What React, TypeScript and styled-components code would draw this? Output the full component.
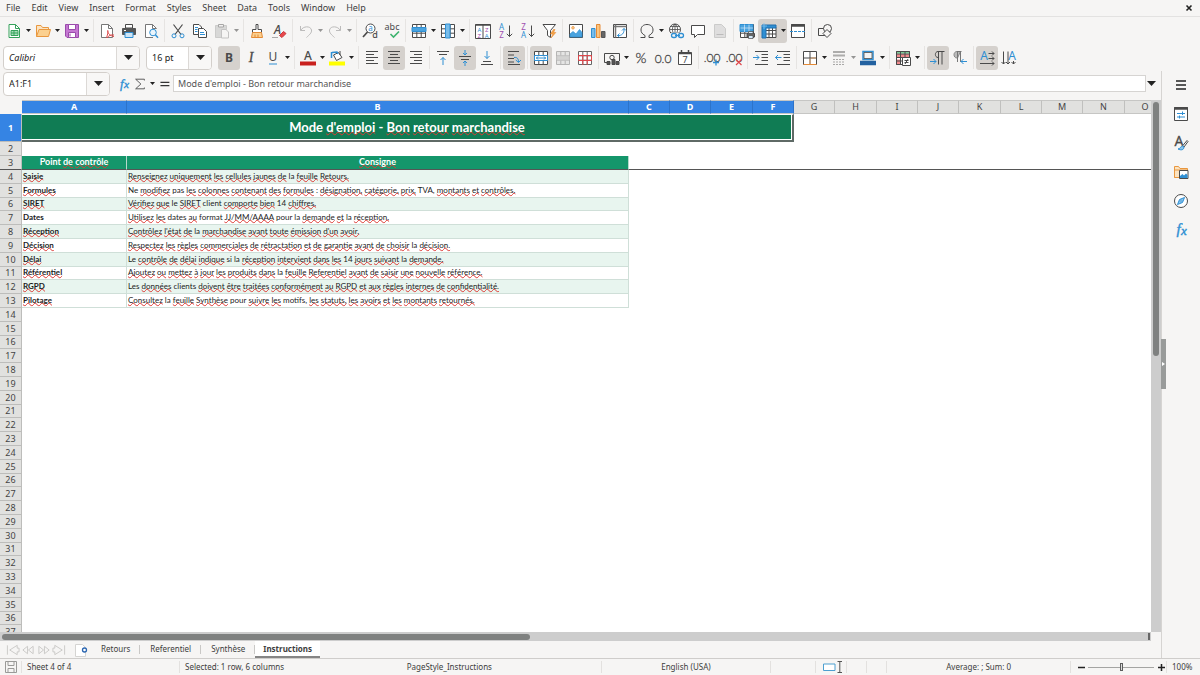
import React from "react";
import styled, { createGlobalStyle, css } from "styled-components";

const ink = "#4a4a4a";
const blue = "#2f8fd3";
const uiFont = '"Noto Sans", "Open Sans", sans-serif';
const cellFont = 'Lato, "Noto Sans", sans-serif';

const GlobalStyle = createGlobalStyle`
  * { box-sizing: border-box; }
  html, body, #root { height: 100%; }
  body { margin: 0; overflow: hidden; background: #f6f5f4; color: #3d3d3d; font: 9px/12px ${uiFont}; }
  button, input { font: inherit; color: inherit; margin: 0; padding: 0; border: 0; background: none; }
  svg { display: block; flex: none; overflow: visible; }
`;

/* ---------- frame ---------- */

const Window = styled.div`
  display: flex;
  flex-direction: column;
  height: 100vh;
`;

const MenuBar = styled.nav`
  display: flex;
  align-items: center;
  justify-content: space-between;
  height: 17px;
  padding: 0 6px 0 1px;
  border-bottom: 1px solid #e3e2e1;
  flex: none;
`;

const MenuList = styled.div`
  display: flex;
`;

const MenuItem = styled.button`
  padding: 0 5px;
  margin-right: 1px;
`;

const CloseButton = styled.button`
  width: 10px;
  height: 14px;
  display: grid;
  place-items: center;
`;

const Toolbar = styled.div`
  display: flex;
  align-items: center;
  height: 27px;
  padding-left: 3px;
  flex: none;
`;

const ToolButton = styled.button<{ $active?: boolean; $off?: boolean }>`
  display: flex;
  align-items: center;
  justify-content: center;
  width: 22px;
  height: 24px;
  border-radius: 3px;
  flex: none;
  ${(p) => p.$active && css`background: #d5d1cd;`}
  ${(p) => p.$off && css`opacity: 0.45;`}
`;

const SplitTool = styled.div<{ $active?: boolean; $off?: boolean }>`
  display: flex;
  align-items: center;
  width: 29px;
  height: 24px;
  border-radius: 3px;
  flex: none;
  ${(p) => p.$active && css`background: #d5d1cd;`}
  ${(p) => p.$off && css`opacity: 0.45;`}
`;

const ArrowButton = styled.button`
  display: grid;
  place-items: center;
  width: 7px;
  height: 22px;
`;

const Divider = styled.span`
  width: 1px;
  height: 23px;
  margin: 0 2px;
  background: #e6e4e2;
  flex: none;
  ${SplitTool} + & { margin-left: 3px; }
`;

/* ---------- combo boxes and formula bar ---------- */

const Combo = styled.div<{ $width: number }>`
  display: flex;
  width: ${(p) => p.$width}px;
  height: 24px;
  margin-right: 6px;
  background: #fff;
  border: 1px solid #d3cfcb;
  border-radius: 4px;
  overflow: hidden;
  flex: none;
`;

const ComboInput = styled.input<{ $italic?: boolean }>`
  flex: 1;
  min-width: 0;
  padding-left: 5px;
  color: #222;
  font-style: ${(p) => (p.$italic ? "italic" : "normal")};
`;

const ComboButton = styled.button`
  display: grid;
  place-items: center;
  width: 23px;
  background: #f8f7f6;
  border-left: 1px solid #dcd9d6;
`;

const FormulaBar = styled(Toolbar)`
  height: 29px;
  padding: 0 4px 4px 3px;
`;

const FormulaTools = styled.div`
  display: flex;
  align-items: center;
  flex: none;
`;

const FormulaButton = styled.button<{ $width: number }>`
  display: grid;
  place-items: center;
  width: ${(p) => p.$width}px;
  height: 22px;
`;

const FormulaInput = styled.input`
  flex: 1;
  min-width: 0;
  height: 17px;
  padding-left: 4px;
  color: #555;
  background: #fff;
  border: 1px solid #d6d4d2;
`;

/* ---------- work area ---------- */

const WorkArea = styled.div`
  display: flex;
  flex: 1;
  min-height: 0;
`;

const Main = styled.main`
  display: flex;
  flex-direction: column;
  flex: 1;
  min-width: 0;
`;

const SideBar = styled.aside`
  position: relative;
  display: flex;
  flex-direction: column;
  align-items: center;
  gap: 5px;
  width: 39px;
  padding-top: 2px;
  border-left: 1px solid #d6d4d2;
  flex: none;
`;

const SideButton = styled.button`
  display: grid;
  place-items: center;
  width: 24px;
  height: 24px;
`;

const SideHandle = styled.button`
  position: absolute;
  left: -1px;
  top: calc(50% - 26px);
  display: grid;
  place-items: center;
  width: 5px;
  height: 50px;
  background: #999b9a;
`;

const SheetRow = styled.div`
  display: flex;
  flex: 1;
  min-height: 0;
`;

const SheetView = styled.div`
  flex: 1;
  min-width: 0;
  overflow: hidden;
  background: #fff;
`;

const VerticalTrack = styled.div`
  display: flex;
  justify-content: center;
  width: 10px;
  padding-top: 2px;
  background: #cdcdcd;
  flex: none;
`;

const VerticalThumb = styled.div`
  width: 6px;
  height: 48%;
  border-radius: 3px;
  background: #7f8180;
`;

const HorizontalTrack = styled.div`
  display: flex;
  align-items: center;
  justify-content: space-between;
  height: 9px;
  margin-right: 10px;
  padding: 0 1px 0 2px;
  background: #cdcdcd;
  flex: none;
`;

const HorizontalThumb = styled.div`
  width: 46%;
  height: 6px;
  border-radius: 3px;
  background: #7f8180;
`;

const TrackEnd = styled.div`
  width: 2px;
  height: 7px;
  background: #666;
`;

/* ---------- sheet ---------- */

const Grid = styled.table`
  width: 100%;
  table-layout: fixed;
  border-collapse: separate;
  border-spacing: 0;
  line-height: 12px;
  td, th { padding: 0; white-space: nowrap; overflow: hidden; }
`;

const Corner = styled.th`
  background: #f6f5f4;
`;

const ColumnHead = styled.th<{ $selected?: boolean }>`
  height: 14px;
  font-weight: ${(p) => (p.$selected ? 700 : 400)};
  color: ${(p) => (p.$selected ? "#fff" : "#444")};
  background: ${(p) => (p.$selected ? "#3584e4" : "#e1e1df")};
  border-right: 1px solid ${(p) => (p.$selected ? "#2d73c9" : "#c0c0be")};
  border-top: 1px solid #c6c6c4;
  border-bottom: 1px solid #c6c6c4;
`;

const RowHead = styled.th<{ $selected?: boolean; $frozenEdge?: boolean }>`
  font-weight: ${(p) => (p.$selected ? 700 : 400)};
  color: ${(p) => (p.$selected ? "#fff" : "#444")};
  background: ${(p) => (p.$selected ? "#3584e4" : "#e1e1df")};
  border-right: 1px solid #bdbdbb;
  border-bottom: 1px solid ${(p) => (p.$frozenEdge ? "#555" : "#bdbdbb")};
`;

const RowLine = styled.tr<{ $height: number }>`
  height: ${(p) => p.$height}px;
  > * { height: ${(p) => p.$height}px; line-height: ${(p) => p.$height - 1}px; }
`;

const TitleCell = styled.td`
  background: #107c54;
  color: #fff;
  text-align: center;
  border-top: 1px solid #fff;
  border-right: 2px solid #5f6a66;
  border-bottom: 2px solid #5f6a66;
  box-shadow: inset -1px -1px 0 #fff;
  && {
    padding-bottom: 1px;
    font: 700 13px/20px ${cellFont};
  }
`;

const HeadingCell = styled.th`
  background: #14966b;
  color: #fff;
  border-right: 1px solid #b7d9cc;
  border-bottom: 1px solid #555;
  && {
    padding-bottom: 2px;
    font: 700 9px/10px ${cellFont};
  }
`;

const EmptyCell = styled.td<{ $frozenEdge?: boolean }>`
  border-bottom: ${(p) => (p.$frozenEdge ? "1px solid #555" : "0")};
`;

const DataCell = styled.td<{ $tinted?: boolean; $bold?: boolean }>`
  background: ${(p) => (p.$tinted ? "#e8f5ef" : "#fff")};
  color: #1c1c1c;
  border-right: 1px solid #cfdfd8;
  border-bottom: 1px solid #cfdfd8;
  && {
    padding: 0 0 2px 1px;
    font: ${(p) => (p.$bold ? 700 : 400)} 8px/10px ${cellFont};
  }
`;

const Misspelled = styled.span`
  text-decoration: underline wavy #dc3a34 1px;
  text-decoration-skip-ink: none;
  text-underline-offset: -1px;
`;

/* ---------- tabs and status ---------- */

const TabBar = styled.div`
  display: flex;
  align-items: stretch;
  height: 17px;
  padding-left: 6px;
  font-size: 8px;
  flex: none;
`;

const TabNav = styled.div`
  display: flex;
  align-items: center;
  color: #c9c8c6;
  width: 60px;
  justify-content: space-between;
`;

const NavButton = styled.button`
  display: grid;
  place-items: center;
`;

const AddSheet = styled.button`
  display: grid;
  place-items: center;
  width: 12px;
  margin: 0 4px 0 9px;
`;

const Tab = styled.button<{ $active?: boolean }>`
  position: relative;
  padding: 0 10px;
  line-height: 14px;
  border-bottom: 2px solid transparent;
  &:not(:last-child)::after {
    content: "";
    position: absolute;
    right: 0;
    top: 4px;
    height: 9px;
    border-right: 1px solid #c9c8c6;
  }
  ${(p) => p.$active && css`
    padding: 0 8px;
    font-weight: 700;
    background: #fff;
    border-bottom-color: #858585;
  `}
`;

const StatusBar = styled.footer`
  display: grid;
  grid-template-columns: 22px 158px 118px 304fr 170fr 45fr 31px 20px 20px 184fr 96px 33px;
  align-items: center;
  height: 17px;
  font-size: 8px;
  border-top: 1px solid #cfcdcb;
  flex: none;
`;

const StatusCell = styled.div<{ $center?: boolean; $plain?: boolean }>`
  display: flex;
  align-items: center;
  justify-content: ${(p) => (p.$center ? "center" : "flex-start")};
  height: 12px;
  padding-left: ${(p) => (p.$center ? 0 : 5)}px;
  white-space: nowrap;
  border-right: 1px solid ${(p) => (p.$plain ? "transparent" : "#e3e1df")};
`;

const ZoomButton = styled.button`
  display: grid;
  place-items: center;
  width: 10px;
  height: 12px;
`;

const ZoomSlider = styled.input`
  appearance: none;
  flex: 1;
  min-width: 0;
  height: 10px;
  margin: 0 2px;
  background: linear-gradient(#a5a5a3, #a5a5a3) center / 100% 1px no-repeat;
  &::-webkit-slider-thumb {
    appearance: none;
    width: 3px;
    height: 8px;
    background: #ddd;
    border: 1px solid #5c5c5c;
  }
`;

/* ---------- icons ---------- */

const Svg = ({ children, size = 16 }: { children: React.ReactNode; size?: number }) => (
  <svg width={size} height={size} viewBox="0 0 16 16" fill="none" stroke={ink} strokeWidth="1" aria-hidden="true">
    {children}
  </svg>
);

const Arrow = ({ wide = false }: { wide?: boolean }) => (
  <svg width={wide ? 9 : 5} height={wide ? 5 : 3} viewBox="0 0 8 4" preserveAspectRatio="none" aria-hidden="true">
    <path d="M0 0H8L4 4Z" fill="#222" />
  </svg>
);

const Letter = ({ x, y, size, color = ink, weight = 400, children, family = uiFont, italic = false, outline = 0 }: {
  x: number; y: number; size: number; color?: string; weight?: number; children: string; family?: string; italic?: boolean; outline?: number;
}) => (
  <text x={x} y={y} fontSize={size} fontWeight={weight} fill={color} stroke={outline ? color : "none"} strokeWidth={outline}
    textAnchor="middle" fontFamily={family} fontStyle={italic ? "italic" : "normal"}>{children}</text>
);

const tableGrid = "M1.5 1.5H14.5V14.5H1.5ZM1.5 5.8H14.5M1.5 10.2H14.5M5.8 1.5V14.5M10.2 1.5V14.5";

const icons: Record<string, React.ReactNode> = {
  new: <><path d="M3 1.5H9.5L13.5 5.5V14.5H3Z" fill="#fff" stroke="#35a15b" /><path d="M9.5 1.5V5.5H13.5" stroke="#35a15b" /><path d="M5 7.5H12V12.5H5ZM5 10H12M8 7.5V12.5" fill="#a9dfba" stroke="#35a15b" /></>,
  open: <><path d="M1.5 13.5V2.5H6L7.5 4.5H13.5V6.5" fill="#fbe3c1" stroke="#e9973e" /><path d="M1.5 13.5L4 6.5H15.5L13.5 13.5Z" fill="#fbd08f" stroke="#e9973e" /></>,
  save: <><path d="M1.5 1.5H14.5V14.5H3L1.5 13Z" fill="#c577d2" stroke="#9a4bab" /><path d="M4.5 1.5H11.5V6.5H4.5Z" fill="#fff" stroke="#9a4bab" /><path d="M4.5 9.5H11.5V14.5H4.5Z" fill="#fff" stroke="#9a4bab" /><path d="M6 10.5V13.5" stroke="#9a4bab" /></>,
  pdf: <><path d="M2.5 1.5H9.5L13.5 5.5V14.5H2.5Z" fill="#fff" stroke="#777" /><path d="M9.5 1.5V5.5H13.5" stroke="#777" /><path d="M8.5 7.500C8.5 10 11 13 15 13.5M15 12C12 11.500 9.5 12.5 8 15C7 14 9.5 11 9 7.5" stroke="#dc4a4a" /></>,
  print: <><path d="M4.5 1.5H11.5V5H4.5Z" fill="#fff" /><path d="M1.5 5.5H14.5V11.5H1.5Z" fill="#555" stroke="#555" /><path d="M4 9.5H12V14.5H4Z" fill="#cfe5f5" stroke={blue} /><path d="M3 7.5H5" stroke="#fff" /></>,
  preview: <><path d="M10 14.5H2.5V1.5H9.5L13.5 5.5V6" fill="#fff" stroke="#777" /><path d="M9.5 1.5V5.5H13" stroke="#777" /><circle cx="10" cy="9.5" r="3.3" fill="#eaf5fc" stroke={blue} /><path d="M12.5 12L15 14.7" stroke={blue} strokeWidth="1.5" /></>,
  cut: <><path d="M3.5 1.5L11 11.5M12.5 1.5L5 11.5" strokeWidth="1.2" /><circle cx="4" cy="12.8" r="2" stroke={blue} /><circle cx="12" cy="12.8" r="2" stroke={blue} /></>,
  copy: <><path d="M1.5 1.5H7L9.5 4V11.5H1.5Z" fill="#fff" /><path d="M6.5 5.5H11.5L14.5 8.5V14.5H6.5Z" fill="#fff" /><path d="M3 4.5H6M3 6.5H5.5M3 8.5H5.5M8 9.5H12M8 11.5H13" stroke={blue} /></>,
  paste: <><path d="M1.5 2.5H12.5V14.5H1.5Z" fill="#b5b5b5" stroke="#999" /><path d="M4.5 1.5H9.5V4H4.5Z" fill="#eee" /><path d="M7.5 6.5H12L14.5 9V15H7.5Z" fill="#f6f6f6" stroke="#888" /></>,
  brush: <><path d="M7 1.5H9V6.5H12.5V9.5H3.5V6.5H7Z" fill="#fff" /><path d="M3.5 9.5H12.5L13.5 14.5H2.5Z" fill="#fbd08f" stroke="#e58a35" /><path d="M6 11.5V14M9 11.5V14" stroke="#e58a35" /></>,
  clear: <><Letter x={6.5} y={11} size={12} italic weight={500}>A</Letter><path d="M8.5 12.5L12.5 8.5L15 10.5L11 14.5Z" fill="#e8484c" stroke="#c9383c" /><path d="M1 14.5H7" stroke="#aaa" /></>,
  undo: <path d="M2.5 3V7.5H7M2.8 7.3C5 3 12.5 2.5 13.5 7C14 10 11 12 8.5 14.5" stroke="#777" />,
  redo: <path d="M13.5 3V7.5H9M13.2 7.3C11 3 3.5 2.5 2.5 7C2 10 5 12 7.5 14.5" stroke="#777" />,
  find: <><circle cx="8.5" cy="5.5" r="4.5" fill="#fff" /><path d="M5.5 9L1 14" strokeWidth="1.7" /><Letter x={8.5} y={8} size={8} color={blue}>a</Letter><Letter x={13} y={15} size={9} weight={500}>d</Letter></>,
  spell: <><Letter x={8} y={7} size={9}>abc</Letter><path d="M6.5 11L9.5 14L15 8.5" stroke="#3db36e" strokeWidth="1.6" /></>,
  row: <><path d={tableGrid} fill="#fff" /><path d="M1 4.5H15V8.5H1Z" fill="#4aa3df" stroke={blue} /></>,
  column: <><path d={tableGrid} fill="#fff" /><path d="M5.5 1H10V15H5.5Z" fill="#79bdea" stroke={blue} /></>,
  sort: <><path d="M.5 1.5H15.5V15.500H.5ZM8 1.5V15.500" fill="#fff" /><path d="M.5 2H15.5" strokeWidth="1.5" /><Letter x={4.3} y={8.5} size={6} color={blue}>A</Letter><Letter x={4.3} y={14.5} size={6} color="#a04fb0">Z</Letter><Letter x={11.7} y={8.5} size={6} color="#a04fb0">Z</Letter><Letter x={11.7} y={14.5} size={6} color={blue}>A</Letter></>,
  asc: <><Letter x={4.5} y={7} size={8} color={blue}>A</Letter><Letter x={4.5} y={15} size={8} color="#a04fb0">Z</Letter><path d="M12.5 2.5V13.5M9.8 10.8L12.5 13.5L15.2 10.8" /></>,
  desc: <><Letter x={4.5} y={7} size={8} color="#a04fb0">Z</Letter><Letter x={4.5} y={15} size={8} color={blue}>A</Letter><path d="M12.5 2.5V13.5M9.8 10.8L12.5 13.5L15.2 10.8" /></>,
  filter: <><path d="M2 1.5H14.5L9.5 7.5V14.5L6.5 12.5V7.5Z" fill="#fff" /><path d="M12.5 6.5L9.5 11H12L10 15L14.8 9.5H12.5L14 6.5Z" fill="#f6a545" stroke="#e58a35" strokeWidth=".6" /></>,
  image: <><path d="M1.5 1.5H14.5V14.5H1.5Z" fill="#fff" /><path d="M2 14V11L5 8.5L8 11L11.5 6.5L14 9.5V14Z" fill="#4aa3df" stroke={blue} strokeWidth=".7" /><circle cx="5" cy="4.8" r="1.3" fill="#fbd08f" stroke="#e58a35" strokeWidth=".7" /></>,
  chart: <><path d="M1.5 5.5H5V14.5H1.5Z" fill="#79bdea" stroke={blue} /><path d="M6.5 1.5H10V14.5H6.5Z" fill="#fbc580" stroke="#e58a35" /><path d="M11.5 8.5H15V14.5H11.5Z" fill="#666" stroke="#555" /></>,
  pivot: <><path d="M1.5 1.5H14.5V14.5H1.5Z" fill="#fff" /><path d="M1.5 3.5H14.5M3.5 1.5V14.5" strokeWidth="1.5" stroke="#777" /><path d="M5.5 12.5C10 13 12.5 10 12 5.5M10 7.5L12 5.5L14 7.5M7.5 10.5L5.5 12.5L7.5 14.3" stroke={blue} /></>,
  omega: <path d="M1.5 14.5H6V12.5C3 11 2 9 2 7C2 3.5 4.5 1.5 8 1.5C11.5 1.5 14 3.5 14 7C14 9 13 11 10 12.5V14.5H14.5" />,
  link: <><circle cx="7" cy="6.5" r="5.5" fill="#fff" /><path d="M1.5 6.5H12.5M7 1V12M3 3.5H11M3 9.5H11M7 1C3.5 4 3.5 9 7 12C10.5 9 10.5 4 7 1" strokeWidth=".8" /><rect x="3" y="9.5" width="13" height="6.5" fill="#f6f5f4" stroke="none" /><rect x="3.5" y="10.5" width="5" height="4" rx="2" stroke={blue} strokeWidth="1.3" /><rect x="10.5" y="10.5" width="5" height="4" rx="2" stroke={blue} strokeWidth="1.3" /><path d="M7 12.5H12" stroke={blue} strokeWidth="1.3" /></>,
  comment: <path d="M1.5 2.5H14.5V11.5H7.5L4.5 14.5V11.5H1.5Z" fill="#fff" />,
  footer: <><path d="M2.5 1.5H9.5L13.5 5.5V14.5H2.5Z" fill="#c4c4c4" stroke="#999" /><path d="M4.5 11.5H11.5" stroke="#777" /></>,
  printArea: <><path d={tableGrid} fill="#fff" /><path d="M1 1.5H14V8.5H1Z" fill="#4aa3df" stroke={blue} /><path d="M1.5 5H14M5.5 1.5V9M10 1.5V9" stroke="#d5eafa" strokeWidth=".7" /><path d="M8 10.5H15.5V14H8Z" fill="#666" /><path d="M9.5 8.5H14V10.5H9.5ZM9.5 12.5H14V15.5H9.5Z" fill="#d5eafa" strokeWidth=".7" /></>,
  freeze: <><path d="M4.5 4.5H15V14.5H4.5ZM4.5 7.5H15M4.5 11H15M8 4.5V14.5M11.5 4.5V14.5" fill="#fff" /><path d="M1 2H15V5H5V15H1Z" fill="#2f8fd3" stroke="#1f6fae" /><path d="M3 0V6M0 3H6" stroke="#7fc3f0" strokeWidth=".8" /></>,
  split: <><path d="M1.5 1.5H14.5V14.5H1.5Z" fill="#fff" /><path d="M1 2.5H15" strokeWidth="2.5" /><path d="M0 8.5H16" stroke={blue} strokeDasharray="3 1" /></>,
  shapes: <><path d="M1.5 5.5H8.5V12.5H1.5Z" /><circle cx="10.5" cy="5.5" r="4" fill="#f6f5f4" /><path d="M10 6.5L14 10.5L10 14.5L6 10.5Z" fill="#f6f5f4" /></>,
  bold: <Letter x={8} y={12} size={12} weight={700}>B</Letter>,
  italic: <Letter x={8} y={12} size={14} italic family='"Liberation Serif", serif' outline={0.3}>I</Letter>,
  underline: <><Letter x={8} y={11} size={12}>U</Letter><path d="M4 14H12" stroke={blue} /></>,
  fontColor: <><Letter x={8} y={9.5} size={12} weight={500}>A</Letter><path d="M0 13.5H16" stroke="#c9211e" strokeWidth="4" /></>,
  highlight: <><path d="M4.5 5L9.5 2.5L13 7.5L7.5 10.5Z" fill="#fff" /><path d="M2.5 2V8M3 2.5L8 2L9 4" stroke={blue} strokeWidth="1.5" /><path d="M11 1V5" /><path d="M0 13.5H16" stroke="#ffff00" strokeWidth="4" /></>,
  left: <path d="M2 1.5H14M2 4.5H10M2 7.5H14M2 10.5H10M2 13.5H14" />,
  center: <path d="M2 1.5H14M4 4.5H12M2 7.5H14M4 10.5H12M2 13.5H14" />,
  right: <path d="M2 1.5H14M6 4.5H14M2 7.5H14M6 10.5H14M2 13.5H14" />,
  top: <><path d="M2 1.5H14M4 4.5H12" /><path d="M8 15V7.5M5.5 10L8 7.5L10.5 10" stroke={blue} /></>,
  middle: <><path d="M2 6.500H14M4 9.5H12" /><path d="M8 0V5M6 3L8 5L10 3M8 16V11M6 13L8 11L10 13" stroke={blue} /></>,
  bottom: <><path d="M2 14.5H14M4 11.5H12" /><path d="M8 1V8.5M5.5 6L8 8.5L10.5 6" stroke={blue} /></>,
  wrap: <><path d="M2 1.5H13M2 5H8M2 8.5H8M2 12H8M2 14.5H14" /><path d="M8 7.5C11.5 7 12.5 9 12.5 12M9.8 10L12.5 12.5L15 10" stroke={blue} /></>,
  merge: <><path d={tableGrid} fill="#fff" /><path d="M1.5 5.5H14.5V10.5H1.5Z" fill="#fff" stroke={blue} /><path d="M3 8H13M5 6.5L3.5 8L5 9.5M11 6.5L12.5 8L11 9.5" stroke={blue} /></>,
  mergeOnly: <><path d={tableGrid} fill="#d2d2d2" stroke="#666" /><path d="M2 6H14V10H2Z" fill="#aaa" stroke="#999" /></>,
  splitCells: <><path d={tableGrid} fill="#fff" stroke="#666" /><path d="M1.5 5.5H14.5V10.5H1.5ZM5.8 5V15M10.2 5V15" stroke="#e0474c" /></>,
  currency: <><path d="M.5 3.5H15.5V11" /><path d="M.5 3.5V12.5H5" /><circle cx="8" cy="7.5" r="2.2" /><path d="M3 11.5H6V14.5H3ZM8 9.5H11V14.5H8ZM12 11.5H15V14.5H12Z" fill="#555" /></>,
  percent: <Letter x={8} y={13} size={14} weight={300} family={cellFont} outline={0.3}>%</Letter>,
  number: <Letter x={8} y={13} size={12} weight={300} family={cellFont} outline={0.3}>0.0</Letter>,
  date: <><path d="M1.5 2.5H14.5V14.5H1.5Z" fill="#fff" /><path d="M1 3.5H15M4.5 0V3M11.5 0V3" strokeWidth="1.5" /><Letter x={8} y={13} size={9}>7</Letter></>,
  addDecimal: <><Letter x={8} y={12} size={12} weight={300} family={cellFont} outline={0.3}>.00</Letter><path d="M12 9.5V15.5M9 12.5H15" stroke={blue} strokeWidth="1.3" /></>,
  removeDecimal: <><Letter x={8} y={12} size={12} weight={300} family={cellFont} outline={0.3}>.00</Letter><path d="M10 9.5L15.5 15M15.5 9.5L10 15" stroke="#e0474c" strokeWidth="1.2" /></>,
  indent: <><path d="M2 1.5H15M8.5 4.5H15M8.5 7.5H15M8.5 10.5H15M2 14.5H15" /><path d="M0 7.5H6M3.5 5L6 7.5L3.5 10" stroke={blue} /></>,
  outdent: <><path d="M2 1.5H15M8.5 4.5H15M8.5 7.5H15M8.5 10.5H15M2 14.5H15" /><path d="M.5 7.5H6.5M3 5L.5 7.5L3 10" stroke={blue} /></>,
  borders: <><path d="M1.5 1.5H14.5V14.5H1.5ZM8 1.5V14.5M1.5 8H14.5" fill="#fff" /><path d="M1.5 14.5H14.5" stroke="#e58a35" /><path d="M8 8.5V14M9 8H14" stroke="#d9a06a" /></>,
  lineStyle: <><path d="M2 2H14M2 5.5H14" stroke="#555" strokeWidth="2" /><path d="M2 9.5H14M2 12H14M2 14.5H14" strokeDasharray="2 1" /></>,
  borderColor: <><path d="M3 1.5H13V9.5H3Z" fill="#f4f4f4" stroke={blue} strokeWidth="1.5" /><path d="M4 2.5H12V8.5H4Z" strokeWidth=".8" /><path d="M0 13H16" stroke="#2361a0" strokeWidth="4.5" /></>,
  conditional: <><path d="M1.5 1.5H14.5V14.5H1.5Z" fill="#fff" /><path d="M2 5.5H14" stroke="#f08a8d" strokeWidth="3" /><path d="M2 9.5H5V14H2Z" fill="#f08a8d" stroke="none" /><path d="M2 2.5H14" stroke="#7ccb95" strokeWidth="2" /><path d="M1.5 1.500V14.500H8M1.5 1.500H14.500V8M5.5 1V14.5M10 1V8M1.5 4H14.5M1.5 7.500H14.5M1.5 11H8" /><path d="M7.5 7.5H15.5V15.5H7.5Z" fill="#fff" /><path d="M9.5 10.5H13.5M9.5 12.5H13.5M13 9L10 14" /></>,
  ltr: <><path d="M14.5 1.5H8C4.5 1.5 4.5 7.5 8 7.5H8.5M8.5 1.5V14.5M12 1.5V14.5" /><path d="M0 11.5H6M3.5 9L6 11.5L3.5 14" stroke={blue} /></>,
  rtl: <><path d="M8.5 1.5H5C1 1.5 1 8 5 8H5.5Z" fill="#bbb" stroke="#888" /><path d="M9.5 1.5H5M5.5 1.5V12M8.5 1.5V12" stroke="#777" /><path d="M15 11.5H9M11.5 9L9 11.5L11.5 14" stroke={blue} /></>,
  horizontal: <><Letter x={5} y={10} size={12} color={blue}>A</Letter><path d="M9.5 3.5H15M13 1.5L15 3.5L13 5.5M9.5 8.5H15M13 6.5L15 8.5L13 10.5M1 13.5H15M13 11.5L15 13.5L13 15.5" /></>,
  vertical: <><Letter x={11} y={10} size={12} color={blue}>A</Letter><path d="M2.5 1.5V14M.5 12L2.5 14L4.5 12M7 1.5V14M5 12L7 14L9 12M12.5 11V14M10.5 12L12.5 14L14.5 12" /></>,
  fx: <><Letter x={5.5} y={12} size={15} italic color={blue} outline={0.4} family='"Liberation Serif", serif'>f</Letter><Letter x={11} y={13} size={13} italic color={blue} outline={0.4} family='"Liberation Serif", serif'>x</Letter></>,
  sum: <path d="M13 4V2.5H3L9 8L3 13.5H13V12" />,
  equal: <path d="M3 6.5H14M3 10.5H14" strokeWidth="1.6" stroke="#333" />,
  menu: <path d="M3 4H13M3 8H13M3 12H13" strokeWidth="1.5" stroke="#222" />,
  properties: <><path d="M1.5 1.5H14.5V14.5H1.5Z" fill="#fff" /><path d="M1 2.5H15" strokeWidth="2.5" /><path d="M4 7.5H12M4 11H12M9.5 5.5V9M6.5 9.5V12.5" stroke={blue} /></>,
  styles: <><Letter x={6} y={11} size={14} outline={0.3}>A</Letter><path d="M9.5 11L14 5.5L15 6.5L11 12Z" fill="#fff" /><path d="M9.5 11C7.5 11 8 13.5 5 14C8 15.5 11 15 11 12Z" fill="#8cc6ee" stroke={blue} /></>,
  gallery: <><path d="M6 13.5H1.5V2.5H5.5L7 4.5H14.5V6" fill="#fbe3c1" stroke="#e9973e" /><path d="M1.5 13.5V6H15" stroke="#e9973e" /><path d="M6.5 6.5H15V14.5H6.5Z" fill="#fff" /><path d="M7 14V12L9.5 10L11 11.5L13 9.5L14.5 11V14Z" fill={blue} stroke="none" /></>,
  navigator: <><circle cx="8" cy="8" r="6.5" fill="#fff" /><path d="M11.5 4.5L9.5 9.5L4.5 11.5L6.5 6.5Z" fill="#8cc6ee" stroke={blue} /><circle cx="8" cy="8" r="1" fill="#fff" stroke={blue} strokeWidth=".8" /></>,
};

type Tool = { icon: string; label: string; drop?: boolean; active?: boolean; off?: boolean } | "|";

const t = (icon: string, label: string, flags = ""): Tool => ({
  icon, label,
  drop: flags.includes("d"), active: flags.includes("a"), off: flags.includes("o"),
});

const standardTools: Tool[] = [
  t("new", "New", "d"), t("open", "Open", "d"), t("save", "Save", "d"), "|",
  t("pdf", "Export as PDF"), t("print", "Print"), t("preview", "Print preview"), "|",
  t("cut", "Cut"), t("copy", "Copy"), t("paste", "Paste", "do"), "|",
  t("brush", "Clone formatting"), t("clear", "Clear formatting"), "|",
  t("undo", "Undo", "do"), t("redo", "Redo", "do"), "|",
  t("find", "Find and replace"), t("spell", "Spelling"), "|",
  t("row", "Row", "d"), t("column", "Column", "d"), "|",
  t("sort", "Sort"), t("asc", "Sort ascending"), t("desc", "Sort descending"), t("filter", "AutoFilter"), "|",
  t("image", "Insert image"), t("chart", "Insert chart"), t("pivot", "Pivot table"), "|",
  t("omega", "Special character", "d"), t("link", "Hyperlink"), t("comment", "Comment"), t("footer", "Headers and footers", "o"), "|",
  t("printArea", "Define print area"), t("freeze", "Freeze rows and columns", "da"), t("split", "Split window"), "|",
  t("shapes", "Draw functions"),
];

const formatTools: Tool[] = [
  t("bold", "Bold", "a"), t("italic", "Italic"), t("underline", "Underline", "d"), "|",
  t("fontColor", "Font color", "d"), t("highlight", "Highlighting", "d"), "|",
  t("left", "Align left"), t("center", "Align center", "a"), t("right", "Align right"), "|",
  t("top", "Align top"), t("middle", "Center vertically", "a"), t("bottom", "Align bottom"), "|",
  t("wrap", "Wrap text", "a"), "|",
  t("merge", "Merge and center", "a"), t("mergeOnly", "Merge cells", "o"), t("splitCells", "Unmerge cells"), "|",
  t("currency", "Currency", "d"), t("percent", "Percent"), t("number", "Number"), t("date", "Date"), "|",
  t("addDecimal", "Add decimal place"), t("removeDecimal", "Delete decimal place"), "|",
  t("indent", "Increase indent"), t("outdent", "Decrease indent"), "|",
  t("borders", "Borders", "d"), t("lineStyle", "Border style", "do"), t("borderColor", "Border color", "d"), "|",
  t("conditional", "Conditional formatting", "d"), "|",
  t("ltr", "Left to right", "a"), t("rtl", "Right to left"), "|",
  t("horizontal", "Text direction horizontal", "a"), t("vertical", "Text direction vertical"),
];

const Tools = ({ items }: { items: Tool[] }) => (
  <>
    {items.map((item, i) => {
      if (item === "|") return <Divider key={i} />;
      if (!item.drop) {
        return (
          <ToolButton key={i} aria-label={item.label} $active={item.active} $off={item.off}>
            <Svg>{icons[item.icon]}</Svg>
          </ToolButton>
        );
      }
      return (
        <SplitTool key={i} $active={item.active} $off={item.off}>
          <ToolButton aria-label={item.label}><Svg>{icons[item.icon]}</Svg></ToolButton>
          <ArrowButton aria-label={`${item.label} options`}><Arrow /></ArrowButton>
        </SplitTool>
      );
    })}
  </>
);

/* ---------- sheet data ---------- */

const menus = ["File", "Edit", "View", "Insert", "Format", "Styles", "Sheet", "Data", "Tools", "Window", "Help"];
const columns = "ABCDEFGHIJKLMNO".split("");
const columnWidths = [105, 502, 41, 41, 42, 41, 41, 42, 41, 41, 42, 41, 41, 42, 41];

const entries = [
  ["Saisie", "Renseignez uniquement les cellules jaunes de la feuille Retours."],
  ["Formules", "Ne modifiez pas les colonnes contenant des formules : désignation, catégorie, prix, TVA, montants et contrôles."],
  ["SIRET", "Vérifiez que le SIRET client comporte bien 14 chiffres."],
  ["Dates", "Utilisez les dates au format JJ/MM/AAAA pour la demande et la réception."],
  ["Réception", "Contrôlez l'état de la marchandise avant toute émission d'un avoir."],
  ["Décision", "Respectez les règles commerciales de rétractation et de garantie avant de choisir la décision."],
  ["Délai", "Le contrôle de délai indique si la réception intervient dans les 14 jours suivant la demande."],
  ["Référentiel", "Ajoutez ou mettez à jour les produits dans la feuille Referentiel avant de saisir une nouvelle référence."],
  ["RGPD", "Les données clients doivent être traitées conformément au RGPD et aux règles internes de confidentialité."],
  ["Pilotage", "Consultez la feuille Synthèse pour suivre les motifs, les statuts, les avoirs et les montants retournés."],
];

const knownWords = new Set(["Mode", "-", "Point", "Dates", "dates", "la", "Ne", "pas", ":", "TVA,", "le", "Le", "client", "clients", "14", "format", "pour", "si", "Les", "motifs,"]);

const Spelled = ({ text }: { text: string }) => (
  <>
    {text.split(" ").map((word, i) => (
      <React.Fragment key={i}>
        {i > 0 && " "}
        {knownWords.has(word) ? word : <Misspelled>{word}</Misspelled>}
      </React.Fragment>
    ))}
  </>
);

const rowHeight = (row: number) => (row % 5 === 1 ? 13 : 14);
const blankRows = Array.from({ length: 25 }, (_, i) => i + 14);

const Sheet = () => (
  <Grid>
    <colgroup>
      <col style={{ width: 22 }} />
      {columnWidths.map((width, i) => <col key={i} style={{ width }} />)}
    </colgroup>
    <thead>
      <tr>
        <Corner aria-label="Select all" />
        {columns.map((name, i) => <ColumnHead key={name} scope="col" $selected={i < 6}>{name}</ColumnHead>)}
      </tr>
    </thead>
    <tbody>
      <RowLine $height={28}>
        <RowHead scope="row" $selected>1</RowHead>
        <TitleCell colSpan={6}>
          <Spelled text="Mode d'emploi - Bon retour marchandise" />
        </TitleCell>
        <EmptyCell colSpan={9} />
      </RowLine>
      <RowLine $height={14}>
        <RowHead scope="row">2</RowHead>
        <EmptyCell colSpan={15} />
      </RowLine>
      <RowLine $height={14}>
        <RowHead scope="row" $frozenEdge>3</RowHead>
        <HeadingCell><Spelled text="Point de contrôle" /></HeadingCell>
        <HeadingCell><Spelled text="Consigne" /></HeadingCell>
        <EmptyCell colSpan={13} $frozenEdge />
      </RowLine>
      {entries.map(([label, text], i) => (
        <RowLine key={label} $height={rowHeight(i + 4)}>
          <RowHead scope="row">{i + 4}</RowHead>
          <DataCell $bold $tinted={i % 2 === 0}><Spelled text={label} /></DataCell>
          <DataCell $tinted={i % 2 === 0}><Spelled text={text} /></DataCell>
          <EmptyCell colSpan={13} />
        </RowLine>
      ))}
      {blankRows.map((row) => (
        <RowLine key={row} $height={rowHeight(row)}>
          <RowHead scope="row">{row}</RowHead>
          <EmptyCell colSpan={15} />
        </RowLine>
      ))}
    </tbody>
  </Grid>
);

const navArrows = [
  ["First sheet", "M1.5 1V11M12 1L4 6L12 11V8H14V4H12Z"],
  ["Previous sheet", "M7 2L2 6L7 10ZM13 2L8 6L13 10Z"],
  ["Next sheet", "M2 2L7 6L2 10ZM8 2L13 6L8 10Z"],
  ["Last sheet", "M13.5 1V11M3 1L11 6L3 11V8H1V4H3Z"],
];

const sideTools = [
  ["menu", "Sidebar settings"], ["properties", "Properties"], ["styles", "Styles"],
  ["gallery", "Gallery"], ["navigator", "Navigator"], ["fx", "Functions"],
];

export default function App() {
  return (
    <Window>
      <GlobalStyle />
      <MenuBar>
        <MenuList>{menus.map((name) => <MenuItem key={name}>{name}</MenuItem>)}</MenuList>
        <CloseButton aria-label="Close document">
          <svg width="6" height="6" viewBox="0 0 6 6" stroke="#222" strokeWidth="1.6"><path d="M.5 .5L5.5 5.5M5.5 .5L.5 5.5" /></svg>
        </CloseButton>
      </MenuBar>
      <Toolbar><Tools items={standardTools} /></Toolbar>
      <Toolbar>
        <Combo $width={137}>
          <ComboInput $italic aria-label="Font name" defaultValue="Calibri" />
          <ComboButton aria-label="Choose font"><Arrow wide /></ComboButton>
        </Combo>
        <Combo $width={66}>
          <ComboInput aria-label="Font size" defaultValue="16 pt" />
          <ComboButton aria-label="Choose size"><Arrow wide /></ComboButton>
        </Combo>
        <Tools items={formatTools} />
      </Toolbar>
      <WorkArea>
        <Main>
          <FormulaBar>
            <Combo $width={107}>
              <ComboInput aria-label="Name box" defaultValue="A1:F1" />
              <ComboButton aria-label="Named ranges"><Arrow wide /></ComboButton>
            </Combo>
            <FormulaTools>
              <FormulaButton $width={16} aria-label="Function wizard"><Svg size={14}>{icons.fx}</Svg></FormulaButton>
              <FormulaButton $width={16} aria-label="Select function"><Svg size={14}>{icons.sum}</Svg></FormulaButton>
              <FormulaButton $width={8} aria-label="Function list"><Arrow /></FormulaButton>
              <FormulaButton $width={17} aria-label="Formula"><Svg size={13}>{icons.equal}</Svg></FormulaButton>
            </FormulaTools>
            <FormulaInput aria-label="Input line" defaultValue="Mode d'emploi - Bon retour marchandise" />
            <FormulaButton $width={11} aria-label="Expand formula bar"><Arrow wide /></FormulaButton>
          </FormulaBar>
          <SheetRow>
            <SheetView><Sheet /></SheetView>
            <VerticalTrack><VerticalThumb /></VerticalTrack>
          </SheetRow>
          <HorizontalTrack><HorizontalThumb /><TrackEnd /></HorizontalTrack>
          <TabBar>
            <TabNav>
              {navArrows.map(([label, d]) => (
                <NavButton key={label} aria-label={label}>
                  <svg width="14" height="12" viewBox="0 0 15 12" fill="none" stroke="currentColor"><path d={d} /></svg>
                </NavButton>
              ))}
            </TabNav>
            <AddSheet aria-label="Add sheet">
              <svg width="12" height="14" viewBox="0 0 12 14" fill="none"><path d="M.5 1.5H7.5L10.5 4.5V13.5H.5Z" fill="#fff" stroke="#d5d4d2" /><circle cx="9.5" cy="7" r="2" fill="#fff" stroke="#2b66b1" strokeWidth="1.3" /></svg>
            </AddSheet>
            <Tab>Retours</Tab>
            <Tab>Referentiel</Tab>
            <Tab>Synthèse</Tab>
            <Tab $active>Instructions</Tab>
          </TabBar>
        </Main>
        <SideBar>
          {sideTools.map(([icon, label]) => (
            <SideButton key={icon} aria-label={label}><Svg>{icons[icon]}</Svg></SideButton>
          ))}
          <SideHandle aria-label="Hide sidebar">
            <svg width="3" height="4" viewBox="0 0 3 4"><path d="M0 0L3 2L0 4Z" fill="#fff" /></svg>
          </SideHandle>
        </SideBar>
      </WorkArea>
      <StatusBar>
        <StatusCell $center>
          <svg width="12" height="12" viewBox="0 0 12 12" fill="none" stroke="#9a9a98"><path d="M.5 .5H11.5V11.5H.5ZM3 .5V4.5H9V.5M3 11.5V7.5H9V11.5" /></svg>
        </StatusCell>
        <StatusCell>Sheet 4 of 4</StatusCell>
        <StatusCell $plain>Selected: 1 row, 6 columns</StatusCell>
        <StatusCell $center>PageStyle_Instructions</StatusCell>
        <StatusCell $center>English (USA)</StatusCell>
        <StatusCell />
        <StatusCell>
          <svg width="22" height="12" viewBox="0 0 22 12" fill="none"><path d="M2.5 3H14V9.5H2.5Z" fill="#fff" stroke="#4d9fd0" /><path d="M16.500 .5H21M16.5 11.5H21M18.800 .5V11.5" stroke="#555" /></svg>
        </StatusCell>
        <StatusCell />
        <StatusCell />
        <StatusCell $center>Average: ; Sum: 0</StatusCell>
        <StatusCell>
          <ZoomButton aria-label="Zoom out"><svg width="7" height="7" viewBox="0 0 7 7" stroke="#222" strokeWidth="1.5"><path d="M0 3.5H7" /></svg></ZoomButton>
          <ZoomSlider type="range" aria-label="Zoom" defaultValue={50} />
          <ZoomButton aria-label="Zoom in"><svg width="7" height="7" viewBox="0 0 7 7" stroke="#222" strokeWidth="1.5"><path d="M0 3.5H7M3.5 0V7" /></svg></ZoomButton>
        </StatusCell>
        <StatusCell $plain>100%</StatusCell>
      </StatusBar>
    </Window>
  );
}
